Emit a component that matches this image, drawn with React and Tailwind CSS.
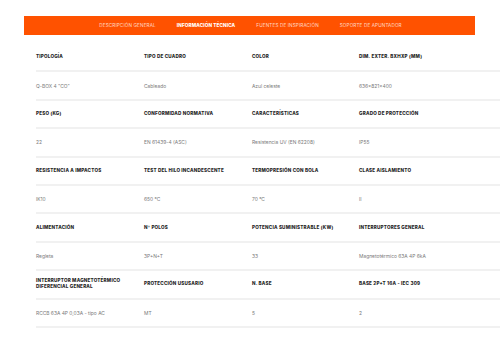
const tabs = [
  { label: 'DESCRIPCIÓN GENERAL' },
  { label: 'INFORMACIÓN TÉCNICA', active: true },
  { label: 'FUENTES DE INSPIRACIÓN' },
  { label: 'SOPORTE DE APUNTADOR' },
];

// pairs of [header row, value row]
const specs = [
  [
    ['TIPOLOGÍA', 'Q-BOX 4 "CO"'],
    ['TIPO DE CUADRO', 'Cableado'],
    ['COLOR', 'Azul celeste'],
    ['DIM. EXTER. BXHXP (MM)', '636x821x400'],
  ],
  [
    ['PESO (KG)', '22'],
    ['CONFORMIDAD NORMATIVA', 'EN 61439-4 (ASC)'],
    ['CARACTERÍSTICAS', 'Resistencia UV (EN 62208)'],
    ['GRADO DE PROTECCIÓN', 'IP55'],
  ],
  [
    ['RESISTENCIA A IMPACTOS', 'IK10'],
    ['TEST DEL HILO INCANDESCENTE', '650 °C'],
    ['TERMOPRESIÓN CON BOLA', '70 °C'],
    ['CLASE AISLAMIENTO', 'II'],
  ],
  [
    ['ALIMENTACIÓN', 'Regleta'],
    ['Nº POLOS', '3P+N+T'],
    ['POTENCIA SUMINISTRABLE (KW)', '33'],
    ['INTERRUPTORES GENERAL', 'Magnetotérmico 63A 4P 6kA'],
  ],
  [
    ['INTERRUPTOR MAGNETOTÉRMICO DIFERENCIAL GENERAL', 'RCCB 63A 4P 0,03A - tipo AC'],
    ['PROTECCIÓN USUSARIO', 'MT'],
    ['N. BASE', '5'],
    ['BASE 2P+T 16A - IEC 309', '2'],
  ],
];

function Row({ cells, head }) {
  return (
    <div className="grid grid-cols-[108px_108px_107px_109px] h-[28.4px] border-b-2 border-[#f1f1f1] items-center">
      {cells.map((c, i) => (
        <div
          key={i}
          className={
            head
              ? 'pr-3 text-[4.6px] leading-[6px] font-extrabold tracking-[0.2px] text-[#262626]'
              : 'text-[4.9px] leading-[6px] text-[#7a7a7a]'
          }
        >
          {c}
        </div>
      ))}
    </div>
  );
}

export default function App() {
  return (
    <div className="w-[500px] h-[345px] bg-white overflow-hidden font-['Inter',sans-serif]">
      <div className="pt-4 pl-6">
        <nav className="w-[451px] h-[19px] bg-[#ff5200] flex items-center justify-center gap-[21px] pl-[2px]">
          {tabs.map((t) => (
            <span
              key={t.label}
              className={
                t.active
                  ? 'text-[4.7px] font-extrabold text-white tracking-[0.1px]'
                  : 'text-[4.7px] text-[#ffd9c7] tracking-[0.1px]'
              }
            >
              {t.label}
            </span>
          ))}
        </nav>
      </div>

      <div className="pl-9 pt-[9px]">
        {specs.map((group, gi) => (
          <div key={gi}>
            <Row head cells={group.map((c) => c[0])} />
            <Row cells={group.map((c) => c[1])} />
          </div>
        ))}
      </div>
    </div>
  );
}
